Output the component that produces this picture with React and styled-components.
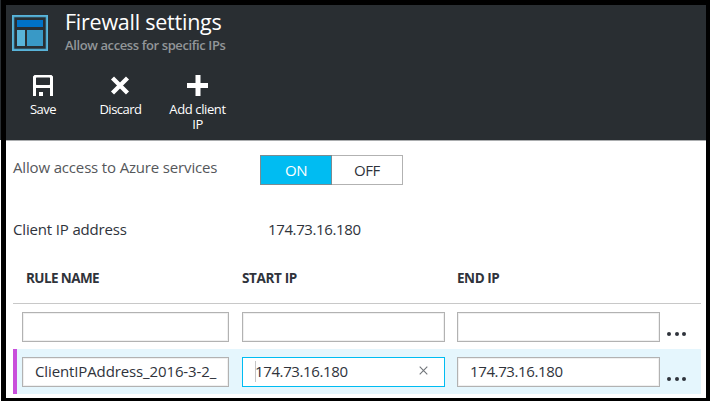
import React from "react";
import styled, { createGlobalStyle } from "styled-components";

const GlobalStyle = createGlobalStyle`
  * { box-sizing: border-box; }
  body { margin: 0; background: #fff; overflow: hidden; }
`;

const Page = styled.div`
  width: 710px;
  height: 401px;
  padding-left: 1px;
  background: linear-gradient(#292e32 140px, #fff 140px);
  font-family: "Open Sans", "Noto Sans", sans-serif;
  color: #2f333b;
`;

const Blade = styled.main`
  height: 401px;
  border: solid #000;
  border-width: 5px 4px 3px 5px;
  background: #fff;
  overflow: hidden;
`;

const Header = styled.header`
  height: 136px;
  background: #292e32;
  border-bottom: 1px solid #abadaf;
`;

const TitleBar = styled.div`
  display: flex;
  height: 62px;
  padding: 10px 0 0 6px;
  gap: 17px;
`;

const Titles = styled.div`
  display: flex;
  flex-direction: column;
  margin-top: -9px;
  white-space: nowrap;
`;

const Title = styled.h1`
  margin: 0;
  font-size: 21.5px;
  font-weight: 400;
  line-height: 32px;
  letter-spacing: -0.24px;
  color: #fff;
`;

const Subtitle = styled.p`
  margin: 0;
  font-size: 13px;
  font-weight: 600;
  line-height: 14px;
  letter-spacing: -0.39px;
  color: #929699;
`;

const Toolbar = styled.nav`
  display: flex;
`;

const Command = styled.button`
  display: flex;
  flex-direction: column;
  align-items: center;
  width: 77px;
  height: 70px;
  margin: 0;
  padding: 8px 0 0;
  border: 0;
  background: none;
  font: 400 13px/15px "Open Sans", sans-serif;
  letter-spacing: ${(p) => p.$spacing}px;
  color: #fff;

  &:first-child { width: 74px; margin-right: 2px; }
  svg { display: block; margin-bottom: 5px; }
`;

const Setting = styled.div`
  display: flex;
  align-items: center;
  height: ${(p) => p.$height}px;
  padding-top: ${(p) => p.$offset || 0}px;
  padding-left: 7px;
`;

const SettingLabel = styled.span`
  width: ${(p) => p.$width}px;
  margin-bottom: ${(p) => p.$lift || 0}px;
  font-size: 15px;
  line-height: 20px;
  letter-spacing: -0.16px;
  color: ${(p) => p.$color};
  white-space: nowrap;
`;

const Address = styled.span`
  font-size: 15px;
  line-height: 20px;
  letter-spacing: -0.38px;
`;

const Switch = styled.div`
  display: flex;
  width: 143px;
  height: 30px;
  margin-top: 4px;
`;

const SwitchOption = styled.button`
  width: ${(p) => (p.$on ? 72 : 71)}px;
  padding: 0;
  border: 1px solid ${(p) => (p.$on ? "#7b8b91" : "#b2b2b2")};
  border-left-width: ${(p) => (p.$on ? 1 : 0)}px;
  background: ${(p) => (p.$on ? "#00bcf2" : "#fff")};
  color: ${(p) => (p.$on ? "#fff" : "#2f333b")};
  font: 400 15px/28px "Open Sans", sans-serif;
  letter-spacing: -0.4px;
`;

const Rules = styled.section`
  margin: 0 5px 0 7px;
`;

const columns = `
  display: grid;
  grid-template-columns: 207px 203px 203px 24px;
  column-gap: 13px;
`;

const RulesHead = styled.div`
  ${columns}
  height: 49px;
  padding: 14px 0 0 9px;
  border-bottom: 1px solid #c8c8c8;
`;

const ColumnTitle = styled.span`
  padding-left: ${(p) => p.$indent || 0}px;
  margin-left: ${(p) => p.$shift || 0}px;
  font-size: 13.5px;
  font-weight: 700;
  line-height: 18px;
  letter-spacing: ${(p) => p.$spacing}px;
`;

const RuleRow = styled.div`
  ${columns}
  height: 45px;
  padding: 8px 0 0 5px;
  border-left: 4px solid ${(p) => (p.$active ? "#c84fdb" : "transparent")};
  background: ${(p) => (p.$active ? "#e5f6fd" : "transparent")};

  & > :nth-child(3) { margin: 0 1px 0 -1px; }
`;

const Field = styled.div`
  display: flex;
  align-items: center;
  height: 30px;
  padding: 0 16px 2px 12px;
  border: 1px solid ${(p) => (p.$focused ? "#00bcf2" : "#b2b2b2")};
  background: #fff;
  box-shadow: ${(p) => (p.$focused ? "none" : "inset 0 0 0 1px #f0f0f0")};
  font-size: 15px;
  letter-spacing: ${(p) => p.$spacing ?? -0.38}px;
  white-space: nowrap;

  svg { margin: 0 0 2px auto; }
`;

const Caret = styled.span`
  width: 1px;
  height: 21px;
  margin-right: -1px;
  background: #c5c5c5;
`;

const More = styled.button`
  display: flex;
  gap: 3.5px;
  height: 4px;
  margin: 20px 0 0 -7px;
  padding: 0;
  border: 0;
  background: none;
`;

const Dot = styled.i`
  width: 4px;
  height: 4px;
  border-radius: 2px;
  background: #2f333b;
`;

const FirewallIcon = () => (
  <svg width="36" height="36" viewBox="0 0 36 36">
    <rect x="1" y="1" width="34" height="34" fill="none" stroke="#59b4d9" strokeWidth="2" />
    <rect x="2" y="2" width="32" height="32" fill="none" stroke="#3f91b5" strokeWidth=".7" />
    <path fill="#0072c6" d="M5 5h26v7H5z" />
    <path fill="#59b4d9" d="M5 15h8v16H5z" />
    <path fill="#3999c6" d="M15 15h16v16H15z" />
  </svg>
);

const SaveIcon = () => (
  <svg width="22" height="22" viewBox="0 0 22 22">
    <path fill="#fff" fillRule="evenodd" d="M2.500 0h17L21 1.500V21h-3v-8H4v8H1V1.500zM4.500 2.500L4 3v6.500l.500.500h13l.500-.500V3l-.500-.500zM7 17h4v4H7z" />
  </svg>
);

const DiscardIcon = () => (
  <svg width="22" height="22" viewBox="0 0 22 22">
    <path d="M2.500 3l15 15M17.500 3l-15 15" stroke="#fff" strokeWidth="4.300" />
  </svg>
);

const AddIcon = () => (
  <svg width="22" height="22" viewBox="0 0 22 22">
    <path fill="#fff" d="M8.500 0h5v8H21v5h-7.500v8h-5v-8H0V8h8.500z" />
  </svg>
);

const ClearIcon = () => (
  <svg width="9" height="9" viewBox="0 0 9 9">
    <path d="M.7.700l7.600 7.600M8.300.700L.7 8.300" stroke="#71757a" strokeWidth="1.100" />
  </svg>
);

const MoreButton = () => (
  <More aria-label="More">
    <Dot /><Dot /><Dot />
  </More>
);

export default function App() {
  return (
    <Page>
      <GlobalStyle />
      <Blade>
        <Header>
          <TitleBar>
            <FirewallIcon />
            <Titles>
              <Title>Firewall settings</Title>
              <Subtitle>Allow access for specific IPs</Subtitle>
            </Titles>
          </TitleBar>
          <Toolbar>
            <Command $spacing={-0.5}><SaveIcon />Save</Command>
            <Command $spacing={-0.5}><DiscardIcon />Discard</Command>
            <Command $spacing={-0.38}><AddIcon />Add client<br />IP</Command>
          </Toolbar>
        </Header>
        <Setting $height={54}>
          <SettingLabel $width={247} $lift={2} $color="#55575b">Allow access to Azure services</SettingLabel>
          <Switch>
            <SwitchOption $on>ON</SwitchOption>
            <SwitchOption>OFF</SwitchOption>
          </Switch>
        </Setting>
        <Setting $height={60} $offset={8}>
          <SettingLabel $width={255} $color="#2f333b">Client IP address</SettingLabel>
          <Address>174.73.16.180</Address>
        </Setting>
        <Rules>
          <RulesHead>
            <ColumnTitle $indent={4} $spacing={-0.6}>RULE NAME</ColumnTitle>
            <ColumnTitle $spacing={-0.35}>START IP</ColumnTitle>
            <ColumnTitle $shift={-1} $spacing={-0.45}>END IP</ColumnTitle>
          </RulesHead>
          <RuleRow>
            <Field /><Field /><Field />
            <MoreButton />
          </RuleRow>
          <RuleRow $active>
            <Field $spacing={-0.12}>ClientIPAddress_2016-3-2_</Field>
            <Field $focused><Caret />174.73.16.180<ClearIcon /></Field>
            <Field>174.73.16.180</Field>
            <MoreButton />
          </RuleRow>
        </Rules>
      </Blade>
    </Page>
  );
}
